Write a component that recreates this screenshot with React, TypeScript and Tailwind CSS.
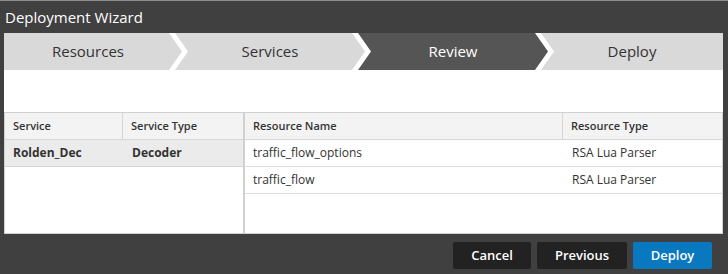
import React from 'react'

const steps = ['Resources', 'Services', 'Review', 'Deploy']
const activeStep = 2

const clipFirst = '[clip-path:polygon(0_0,calc(100%_-_13px)_0,100%_50%,calc(100%_-_13px)_100%,0_100%)]'

function Step({ label, index }: { label: string; index: number }) {
  const active = index === activeStep
  const color = active ? 'bg-[#555555] text-white' : 'bg-[#d9d9d9] text-[#333333]'
  if (index === 0) {
    return (
      <div className={`w-[178px] pr-[10px] flex items-center justify-center ${color} ${clipFirst}`}>
        {label}
      </div>
    )
  }
  if (index === steps.length - 1) {
    return (
      <div className={`flex-1 -ml-[7px] flex items-center justify-center ${color} [clip-path:polygon(0_0,100%_0,100%_100%,0_100%,13px_50%)]`}>
        {label}
      </div>
    )
  }
  return (
    <div className={`w-[190px] -ml-[7px] flex items-center justify-center ${color} [clip-path:polygon(0_0,calc(100%_-_13px)_0,100%_50%,calc(100%_-_13px)_100%,0_100%,13px_50%)]`}>
      {label}
    </div>
  )
}

const resources = [
  { name: 'traffic_flow_options', type: 'RSA Lua Parser' },
  { name: 'traffic_flow', type: 'RSA Lua Parser' },
]

export default function App() {
  return (
    <div className="w-[728px] h-[274px] bg-[#404040] border-t border-[#8c8c8c] flex flex-col font-['Open_Sans',sans-serif] overflow-hidden">
      <div className="h-[32px] pl-[5px] flex items-center text-white text-[15px]">Deployment Wizard</div>

      <div className="ml-[4px] mr-[5px] h-[201px] bg-white flex flex-col">
        <div className="h-[37px] flex text-[15px]">
          {steps.map((s, i) => (
            <Step key={s} label={s} index={i} />
          ))}
        </div>

        <div className="h-[42px]" />

        <div className="flex-1 flex border-t border-b border-l border-r border-[#d0d0d0] text-[12px] text-[#333333]">
          {/* services */}
          <div className="w-[238px] flex flex-col">
            <div className="grid grid-cols-[118px_1fr] h-[27px] bg-[#f3f3f3] border-b border-[#d6d6d6] font-semibold text-[11px]">
              <div className="px-[8px] flex items-center border-r border-[#d6d6d6]">Service</div>
              <div className="px-[8px] flex items-center">Service Type</div>
            </div>
            <div className="grid grid-cols-[118px_1fr] h-[27px] bg-[#ebebeb] border-b border-[#d6d6d6] font-bold">
              <div className="px-[8px] flex items-center">Rolden_Dec</div>
              <div className="px-[9px] flex items-center">Decoder</div>
            </div>
          </div>

          <div className="w-[2px] bg-[#d0d0d0]" />

          {/* resources */}
          <div className="flex-1 flex flex-col">
            <div className="grid grid-cols-[318px_1fr] h-[27px] bg-[#f3f3f3] border-b border-[#d6d6d6] font-semibold text-[11px]">
              <div className="px-[8px] flex items-center border-r border-[#d6d6d6]">Resource Name</div>
              <div className="px-[8px] flex items-center">Resource Type</div>
            </div>
            {resources.map((r) => (
              <div key={r.name} className="grid grid-cols-[318px_1fr] h-[27px] border-b border-[#dddddd]">
                <div className="px-[8px] flex items-center">{r.name}</div>
                <div className="px-[9px] flex items-center">{r.type}</div>
              </div>
            ))}
          </div>
        </div>
      </div>

      <div className="mt-[8px] mr-[16px] flex justify-end gap-[6px] text-white text-[13px] font-semibold">
        <button className="w-[78px] h-[27px] rounded-[2px] bg-[#222222]">Cancel</button>
        <button className="w-[90px] h-[27px] rounded-[2px] bg-[#222222]">Previous</button>
        <button className="w-[79px] h-[27px] rounded-[2px] bg-[#0a78be]">Deploy</button>
      </div>
    </div>
  )
}
